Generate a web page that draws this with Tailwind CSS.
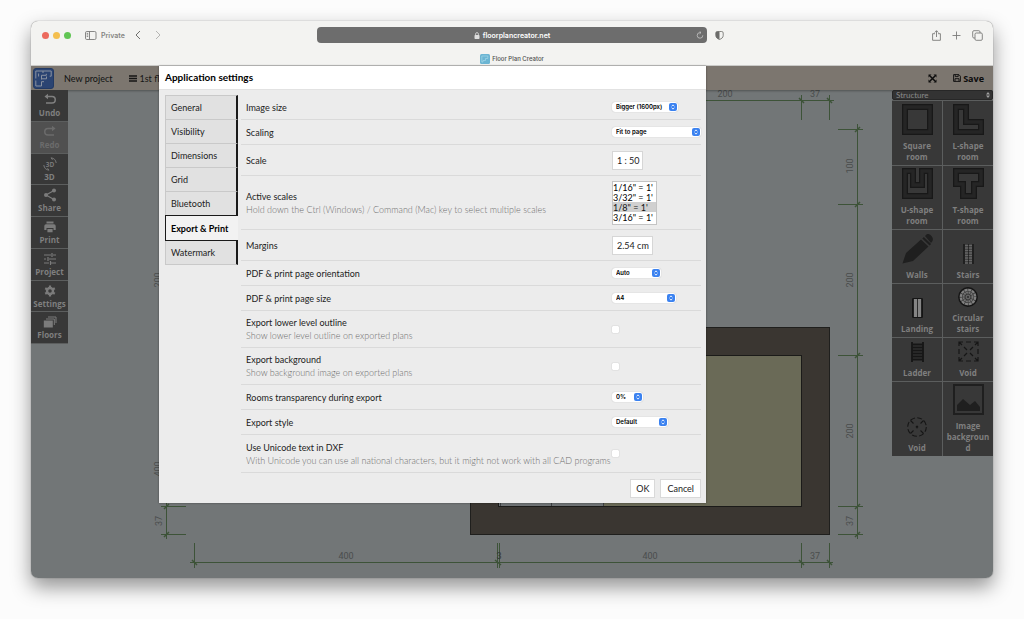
<!DOCTYPE html>
<html lang="en">
<head>
<meta charset="utf-8">
<meta name="viewport" content="width=device-width, initial-scale=1">
<title>Floor Plan Creator</title>
<script src="https://cdn.jsdelivr.net/npm/@tailwindcss/browser@4"></script>
</head>
<body class="flex min-h-screen flex-col bg-[#fcfcfc] px-[31px] pt-[21px] pb-[41px] font-['Lato','Open_Sans',sans-serif] text-[9px] leading-[13px] text-[#222]">
<svg class="hidden">
  <symbol id="updown" viewBox="0 0 8 8"><rect width="8" height="8" rx="2" fill="#3b82f0"/><path d="M2.6 3.2 4 1.9l1.4 1.3M2.6 4.8 4 6.1l1.4-1.3" fill="none" stroke="#fff" stroke-width=".9"/></symbol>
</svg>
<div class="flex flex-1 flex-col overflow-hidden rounded-[7px] bg-[#f3f3f1] shadow-[0_0_1px_rgba(0,0,0,0.6),0_9px_20px_rgba(0,0,0,0.42)]">

  <!-- Browser chrome -->
  <header class="border-b border-[#cfcfcd] font-['Inter',sans-serif] text-[#7b7b79]">
    <div class="grid grid-cols-[1fr_390px_1fr] items-center pt-[6px]">
      <div class="flex items-center pl-[11px]">
        <div class="flex gap-[4px]">
          <span class="size-[7px] rounded-full bg-[#ec6a5e]"></span>
          <span class="size-[7px] rounded-full bg-[#f4bf4f]"></span>
          <span class="size-[7px] rounded-full bg-[#61c554]"></span>
        </div>
        <button class="ml-[14px] flex items-center gap-[4px] text-[7px] font-semibold text-[#858583]">
          <svg class="h-[9px] w-[12px]" viewBox="0 0 12 9" fill="none" stroke="#7b7b79" stroke-width=".9"><rect x=".5" y=".5" width="10.5" height="8" rx="1.3"/><path d="M4.5.5v8M1.7 2.4h1.5M1.7 3.9h1.5M1.7 5.4h1.5"/></svg>
          Private
        </button>
        <button aria-label="Back" class="ml-[10px]"><svg class="h-[10px] w-[6px]" viewBox="0 0 6 10" fill="none" stroke="#70706e" stroke-width="1"><path d="M5 1 1 5l4 4"/></svg></button>
        <button aria-label="Forward" class="ml-[14px]"><svg class="h-[10px] w-[6px]" viewBox="0 0 6 10" fill="none" stroke="#b5b5b3" stroke-width="1"><path d="m1 1 4 4-4 4"/></svg></button>
      </div>
      <div class="relative flex h-[16px] items-center justify-center gap-[3px] rounded-[4px] bg-[#6d6d6d] text-[7px] font-semibold text-white">
        <svg class="h-[7px] w-[6px]" viewBox="0 0 6 7"><rect x=".5" y="3" width="5" height="4" rx=".7" fill="#ddd"/><path d="M1.6 3V2a1.4 1.4 0 0 1 2.8 0v1" fill="none" stroke="#ddd" stroke-width=".8"/></svg>
        floorplancreator.net
        <button aria-label="Reload" class="absolute right-[3px]"><svg class="size-[8px]" viewBox="0 0 8 8" fill="none" stroke="#c6c6c6" stroke-width=".8"><path d="M6.8 4.3A2.8 2.8 0 1 1 4 1.6h.8M3.6.3l1.4 1.3-1.4 1.3"/></svg></button>
      </div>
      <div class="flex items-center pl-[8px] pr-[10px]">
        <svg class="size-[9px]" viewBox="0 0 9 9"><path d="M4.500.5h2.200a1.500 1.500 0 0 1 1.500 1.500v2.600c0 2-1.700 3.100-3.700 3.900C2.500 7.700.8 6.600.8 4.600V2A1.500 1.500 0 0 1 2.300.5z" fill="none" stroke="#6c6c6a" stroke-width=".8"/><path d="M4.500.5H2.300A1.500 1.500 0 0 0 .8 2v2.600c0 2 1.700 3.100 3.700 3.900z" fill="#6c6c6a"/></svg>
        <div class="ml-auto flex items-center gap-[11px]">
          <button aria-label="Share"><svg class="h-[11px] w-[9px]" viewBox="0 0 9 11" fill="none" stroke="#7b7b79" stroke-width=".9"><path d="M3 3.700H.6v6.600h7.800V3.700H6M4.500 7V.8M2.700 2.500 4.500.7l1.800 1.800"/></svg></button>
          <button aria-label="New tab"><svg class="size-[9px]" viewBox="0 0 9 9" stroke="#7b7b79" stroke-width=".9"><path d="M4.500.5v8M.5 4.500h8"/></svg></button>
          <button aria-label="Tabs"><svg class="size-[11px]" viewBox="0 0 11 11" fill="none" stroke="#7b7b79" stroke-width=".9"><rect x="3" y="3" width="7.300" height="7.300" rx="1.200"/><path d="M3 8H1.900A1.200 1.200 0 0 1 .7 6.800V1.900A1.200 1.200 0 0 1 1.900.7h4.900A1.200 1.200 0 0 1 8 1.900V3"/></svg></button>
        </div>
      </div>
    </div>
    <div class="flex items-center justify-center gap-[2px] pt-[9px] text-[6px] font-medium text-[#4f4f4d]">
      <svg class="size-[10px]" viewBox="0 0 10 10"><rect width="10" height="10" rx="1.500" fill="#6cb5d3"/><path d="M3 8H1.800V2h6v2.500H5.500v2H3z" fill="none" stroke="#a5d7e8" stroke-width=".7"/></svg>
      Floor Plan Creator
    </div>
  </header>

  <!-- Application page -->
  <div class="relative flex flex-1 flex-col bg-[#727677]">
    <svg class="absolute inset-0 h-full w-full" viewBox="31 66 962 512" preserveAspectRatio="xMinYMin slice" font-family="Roboto, sans-serif" font-size="9" fill="none">
      <rect x="470.500" y="327.500" width="359" height="207" fill="#3a3631" stroke="#1f1f1d"/>
      <rect x="498.500" y="355.500" width="303" height="151" fill="#6a6a57" stroke="#1b1b19"/>
      <path d="M499 500h105v6H499z" fill="#6f7375"/>
      <path d="M500.500 500v6M551.500 500v6M603.500 500v6" stroke="#3d4042"/>
      <g stroke="#3d5338" stroke-width="1">
        <path d="M190 562.500h643M194.500 543v25M497.500 543v25M499.500 543v25M801.500 543v25M829.500 543v25"/>
        <path d="M700 100.500h134M801.500 95v25M829.500 95v25"/>
        <path d="M857.500 124v415M838 129.500h25M838 204.500h25M838 355.500h25M838 506.500h25M838 534.500h25"/>
        <path d="M166.500 500v39M161 506.500h25M161 534.500h25"/>
        <path stroke-width="1.500" d="m192 560 5 5M495 560l6 5M799 560l5 5M827 560l5 5M799 98l5 5M827 98l5 5M855 132l5-5M855 207l5-5M855 358l5-5M855 509l5-5M855 537l5-5M164 509l5-5M164 537l5-5"/>
      </g>
      <g fill="#4a4d4d" text-anchor="middle">
        <text x="346" y="559">400</text><text x="499" y="559" fill="#333635">3</text><text x="650" y="559">400</text><text x="815" y="559">37</text>
        <text x="725" y="97">200</text><text x="815" y="97">37</text>
        <text transform="translate(853 166) rotate(-90)">100</text>
        <text transform="translate(853 280) rotate(-90)">200</text>
        <text transform="translate(853 431) rotate(-90)">200</text>
        <text transform="translate(853 521) rotate(-90)">37</text>
        <text transform="translate(162 521) rotate(-90)">37</text>
        <text transform="translate(161 280) rotate(-90)">200</text>
        <text transform="translate(161 469) rotate(-90)">400</text>
      </g>
    </svg>

    <nav class="relative flex h-[24px] items-center bg-[#7c766f] text-[#161616] shadow-[0_1px_2px_rgba(0,0,0,0.3)]">
      <svg class="ml-[2px] size-[21px]" viewBox="0 0 21 21"><rect x=".5" y=".5" width="20" height="20" rx="2.500" fill="#2b4472" stroke="#233a63"/><path d="M2.800 10.500V3h15.400v5.200h-1.500M2.800 12.500V18h5.700v-4.300H11M8.500 11.500V7.300h4.800v-1.500M8.500 10.800h5V8.500M5.600 5.500v3M10 3v2" fill="none" stroke="#8a92a0" stroke-width="1"/></svg>
      <a href="#" class="ml-[10px] font-medium">New project</a>
      <button class="ml-[16px] flex w-[31px] items-center gap-[3px] overflow-hidden whitespace-nowrap"><svg class="h-[7px] w-[8px] shrink-0" viewBox="0 0 8 7" stroke="#161616" stroke-width="1.300"><path d="M0 1h8M0 3.500h8M0 6h8"/></svg>1st flo</button>
      <button aria-label="Full screen" class="ml-auto"><svg class="size-[9px]" viewBox="0 0 9 9" fill="#0c0c0c"><path d="M.5.500h3L.5 3.500zM8.500.500v3l-3-3zM.5 8.500v-3l3 3zM8.500 8.500h-3l3-3z"/><path d="m2 2 5 5M7 2 2 7" stroke="#0c0c0c" stroke-width="1.500"/></svg></button>
      <button class="mr-[9px] ml-[16px] flex items-center gap-[2px] font-['Open_Sans',sans-serif] font-bold text-[#0c0c0c]"><svg class="size-[8px]" viewBox="0 0 8 8" fill="none" stroke="#0c0c0c" stroke-width=".9"><path d="M.6.6h5.200l1.600 1.600v5.200H.6zM2.200.6v2h3v-2M2 7.400V4.700h4v2.700"/></svg>Save</button>
    </nav>

    <div class="relative flex items-start justify-between font-['Open_Sans',sans-serif] text-[8px] leading-[11px] font-bold text-[#7f7f7f]">
      <div class="grid h-[254px] w-[37px] auto-rows-fr gap-px bg-[#5c5e5e] pb-px">
        <button class="flex flex-col items-center bg-[#383838] pt-[3px]"><svg class="size-[14px] shrink-0" viewBox="0 0 14 14" fill="none" stroke="#808080" stroke-width="1.500"><path d="M3 3.500h6a3 3 0 0 1 0 6.500H3"/><path d="M5 .8v5.400L1.500 3.500z" fill="#808080" stroke="none"/></svg>Undo</button>
        <button class="flex flex-col items-center bg-[#505050] pt-[3px] text-[#6b6b6b]"><svg class="size-[14px] shrink-0" viewBox="0 0 14 14" fill="none" stroke="#6b6b6b" stroke-width="1.500"><path d="M11 3.500H5A3 3 0 0 0 5 10h6"/><path d="M9 .8v5.400l3.500-2.700z" fill="#6b6b6b" stroke="none"/></svg>Redo</button>
        <button class="flex flex-col items-center bg-[#383838] pt-[3px]"><svg class="size-[14px] shrink-0" viewBox="0 0 14 14" fill="none" stroke="#777"><path d="M8 .8a6 6 0 0 1 5.200 5.200M6 13.200A6 6 0 0 1 .8 8M6 13.200l-1.500-2M8 .8l1.500 2"/><text x="7" y="9.500" text-anchor="middle" font-size="6.500" fill="#777" stroke="none">3D</text></svg>3D</button>
        <button class="flex flex-col items-center bg-[#383838] pt-[3px]"><svg class="size-[14px] shrink-0" viewBox="0 0 14 14" fill="#7b7b7b"><path d="M11 2.500 3 7l8 4.500" fill="none" stroke="#7b7b7b" stroke-width="1.200"/><circle cx="11" cy="2.500" r="2"/><circle cx="3" cy="7" r="2"/><circle cx="11" cy="11.500" r="2"/></svg>Share</button>
        <button class="flex flex-col items-center bg-[#383838] pt-[3px]"><svg class="size-[14px] shrink-0" viewBox="0 0 14 14" fill="#7b7b7b"><path d="M3.500 1.500h7v2h-7zM3 4.300h8a1.700 1.700 0 0 1 1.700 1.700v4H10.500V8h-7v2H1.300V6A1.700 1.700 0 0 1 3 4.300zM4.400 9h5.200v3.300H4.400z"/></svg>Print</button>
        <button class="flex flex-col items-center bg-[#383838] pt-[3px]"><svg class="size-[14px] shrink-0" viewBox="0 0 14 14" fill="none" stroke="#7b7b7b" stroke-width="1.200"><path d="M1 3h7M10 3h3M9 1v4M1 7h2M6 7h7M5 5v4M1 11h5M8 11h5M7.500 9v4"/></svg>Project</button>
        <button class="flex flex-col items-center bg-[#383838] pt-[3px]"><svg class="size-[14px] shrink-0" viewBox="0 0 14 14" fill="none" stroke="#7b7b7b"><circle cx="7" cy="7" r="3" stroke-width="2.400"/><path stroke-width="2.200" d="M7 1.500v2M7 10.500v2M2.200 4.200l1.800 1M10 8.800l1.800 1M2.200 9.800 4 8.800M10 5.200l1.800-1"/></svg>Settings</button>
        <button class="flex flex-col items-center bg-[#383838] pt-[3px]"><svg class="size-[14px] shrink-0" viewBox="0 0 14 14"><path d="M.8 5.500h9v7h-9z" fill="#7b7b7b"/><path d="M3 4h8.300v6M5 2h8v6" fill="none" stroke="#7b7b7b" stroke-width="1"/></svg>Floors</button>
      </div>

      <div class="w-[101px]">
        <div class="relative">
          <select aria-label="Category" class="block h-[10px] w-full appearance-none rounded-[2px] border border-[#272727] bg-[#333] px-[3px] font-['Lato',sans-serif] text-[8px] leading-[8px] font-normal text-[#8a8a8a]"><option>Structure</option></select>
          <svg class="pointer-events-none absolute top-[2px] right-[3px] h-[6px] w-[4px]" viewBox="0 0 4 6" fill="#a0a0a0"><path d="M0 2.500 2 0l2 2.500zM0 3.500 2 6l2-2.500z"/></svg>
        </div>
        <div class="grid grid-cols-2 grid-rows-[64px_63px_53px_53px_43px_74px] gap-px bg-[#5c5e5e] pt-px [&>button]:flex [&>button]:flex-col [&>button]:items-center [&>button]:justify-end [&>button]:gap-[5px] [&>button]:bg-[#383838] [&>button]:px-[2px] [&>button]:pb-[3px]">
          <button><svg class="size-[31px]" viewBox="0 0 31 31" fill="none"><path d="M3 3h25v25H3z" stroke="#181818" stroke-width="6"/><path d="M3 3h25v25H3z" stroke="#252525" stroke-width="3.500"/></svg><span>Square<br>room</span></button>
          <button><svg class="size-[31px]" viewBox="0 0 31 31" fill="none"><path d="M3 3h10v15h15v10H3z" stroke="#181818" stroke-width="6"/><path d="M3 3h10v15h15v10H3z" stroke="#252525" stroke-width="3.500"/></svg><span>L-shape<br>room</span></button>
          <button><svg class="size-[31px]" viewBox="0 0 31 31" fill="none"><path d="M3 3h8v14h9V3h8v25H3z" stroke="#181818" stroke-width="6"/><path d="M3 3h8v14h9V3h8v25H3z" stroke="#252525" stroke-width="3.500"/></svg><span>U-shape<br>room</span></button>
          <button><svg class="size-[31px]" viewBox="0 0 31 31" fill="none"><path d="M3 3h25v13h-7v12H10V16H3z" stroke="#181818" stroke-width="6"/><path d="M3 3h25v13h-7v12H10V16H3z" stroke="#252525" stroke-width="3.500"/></svg><span>T-shape<br>room</span></button>
          <button><svg class="size-[31px]" viewBox="0 0 31 31" fill="#1f1f1f"><path d="M.5 30.500 4 20 19 6.500l7.500 7L11 28zM20.300 5.400l1.500-1.300 7.300 7-1.500 1.400zM23 3l1.500-1.500C27-.6 32.500 4.500 30.500 8l-1.500 2z"/></svg>Walls</button>
          <button><svg class="h-[20px] w-[11px]" viewBox="0 0 11 20" fill="none"><path d="M1 0v20M10 0v20M5.500 0v20" stroke="#151515" stroke-width="1.300"/><path d="M2 1.500h7M2 4h7M2 6.500h7M2 9h7M2 11.500h7M2 14h7M2 16.500h7M2 19h7" stroke="#666" stroke-width="1.600"/><path d="M5.500 0v20" stroke="#222" stroke-width=".8"/></svg>Stairs</button>
          <button><svg class="h-[20px] w-[11px]" viewBox="0 0 11 20"><path d="M.5.500h10v19H.5z" fill="#858585" stroke="#151515"/><path d="M1.500 1v18M9.500 1v18" stroke="#222"/><path d="M5.500 1v18" stroke="#222" stroke-width=".9"/></svg>Landing</button>
          <button><svg class="size-[20px]" viewBox="0 0 20 20" fill="none"><circle cx="10" cy="10" r="9.200" stroke="#151515" stroke-width="1.400"/><circle cx="10" cy="10" r="7.200" stroke="#808080" stroke-width="2.200" stroke-dasharray="3 .77"/><circle cx="10" cy="10" r="4.500" stroke="#737373" stroke-width="2" stroke-dasharray="1.800 .55"/><circle cx="10" cy="10" r="1.900" stroke="#777" stroke-width=".9"/></svg><span>Circular<br>stairs</span></button>
          <button><svg class="h-[20px] w-[15px]" viewBox="0 0 15 20" fill="none" stroke="#161616"><path d="M2 0v20M13 0v20" stroke-width="1.800"/><path d="M2 2.500h11M2 5.500h11M2 8.500h11M2 11.500h11M2 14.500h11M2 17.500h11" stroke-width="1.900"/></svg>Ladder</button>
          <button><svg class="size-[21px]" viewBox="0 0 21 21" fill="none" stroke="#161616" stroke-width="1.200"><path d="M1 5V1h4M8 1h5M16 1h4v4M20 8v5M20 16v4h-4M13 20H8M5 20H1v-4M1 13V8M1 1l3 3M20 1l-3 3M1 20l3-3M20 20l-3-3M6 6l3 3M15 6l-3 3M6 15l3-3M15 15l-3-3"/></svg>Void</button>
          <button><svg class="size-[20px]" viewBox="0 0 20 20" fill="none" stroke="#161616" stroke-width="1.100"><circle cx="10" cy="10" r="9.300" stroke-dasharray="5 2.300"/><path d="m3.500 3.500 3 3M16.500 3.500l-3 3M3.500 16.500l3-3M16.500 16.500l-3-3M9 9l2 2M11 9l-2 2"/></svg>Void</button>
          <button><svg class="size-[31px]" viewBox="0 0 31 31"><path d="M1 1h29v29H1z" fill="none" stroke="#1f1f1f" stroke-width="2"/><path d="M4 27v-6l6-6 7 6 5-4 5 6v4z" fill="#1f1f1f"/></svg><span>Image<br>backgroun<br>d</span></button>
        </div>
      </div>
    </div>

    <!-- Settings dialog -->
    <section role="dialog" aria-labelledby="dlg-title" class="absolute top-0 left-[128px] w-[547px] bg-[#ececec] shadow-[0_0_2px_rgba(0,0,0,0.4)]">
      <h1 id="dlg-title" class="border-b border-[#e2e2e2] bg-white px-[6px] py-[5px] text-[10px] font-bold text-black">Application settings</h1>
      <div class="flex items-start gap-[3px] pt-[5px] pr-[5px] pl-[6px]">
        <div role="tablist" class="flex w-[73px] flex-col [&>button]:flex [&>button]:items-center [&>button]:px-[5px]">
          <button role="tab" class="h-[24px] border-t border-l border-[#c9c9c9] border-r-2 border-r-[#1a1a1a] bg-[#e1e1e1]">General</button>
          <button role="tab" class="h-[24px] border-t border-l border-[#c9c9c9] border-r-2 border-r-[#1a1a1a] bg-[#e1e1e1]">Visibility</button>
          <button role="tab" class="h-[24px] border-t border-l border-[#c9c9c9] border-r-2 border-r-[#1a1a1a] bg-[#e1e1e1]">Dimensions</button>
          <button role="tab" class="h-[24px] border-t border-l border-[#c9c9c9] border-r-2 border-r-[#1a1a1a] bg-[#e1e1e1]">Grid</button>
          <button role="tab" class="h-[24px] border-t border-l border-[#c9c9c9] border-r-2 border-r-[#1a1a1a] bg-[#e1e1e1]">Bluetooth</button>
          <button role="tab" aria-selected="true" class="h-[26px] border-y border-l border-[#1a1a1a] bg-[#f2f2f2] font-bold whitespace-nowrap text-black">Export &amp; Print</button>
          <button role="tab" class="h-[24px] border-b border-l border-[#c9c9c9] border-r-2 border-r-[#1a1a1a] bg-[#e1e1e1]">Watermark</button>
        </div>
        <form class="flex-1 [&>div]:flex [&>div]:items-center [&>div]:border-b [&>div]:border-[#dadada] [&>div]:pl-[5px] [&>div>label]:w-[366px] [&>div>label]:shrink-0 [&>div>label]:whitespace-nowrap [&_small]:block [&_small]:text-[9px] [&_small]:font-light [&_small]:text-[#6c6c6c] [&_select]:text-black">
          <div class="h-[25px]"><label for="imgsize">Image size</label>
            <span class="relative flex w-[66px] items-center"><select id="imgsize" class="h-[10px] w-full appearance-none rounded-[3px] bg-white pl-[4px] font-['Inter',sans-serif] text-[6px] leading-[10px] font-semibold shadow-[0_0_1px_rgba(0,0,0,0.3)]"><option>Bigger (1600px)</option></select><svg class="pointer-events-none absolute right-px size-[8px]"><use href="#updown"/></svg></span></div>
          <div class="h-[25px]"><label for="scaling">Scaling</label>
            <span class="relative flex w-[89px] items-center"><select id="scaling" class="h-[10px] w-full appearance-none rounded-[3px] bg-white pl-[4px] font-['Inter',sans-serif] text-[6px] leading-[10px] font-semibold shadow-[0_0_1px_rgba(0,0,0,0.3)]"><option>Fit to page</option></select><svg class="pointer-events-none absolute right-px size-[8px]"><use href="#updown"/></svg></span></div>
          <div class="h-[31px]"><label for="scale">Scale</label>
            <input id="scale" value="1 : 50" class="h-[19px] w-[31px] border border-[#d6d6d6] bg-white pl-[4px] text-[9px]"></div>
          <div class="h-[54px]"><label for="scales">Active scales<small>Hold down the Ctrl (Windows) / Command (Mac) key to select multiple scales</small></label>
            <select id="scales" multiple size="4" class="h-[44px] w-[45px] overflow-hidden border border-[#c4c4c4] bg-white text-[9px] [&>option]:h-[10px] [&>option]:min-h-0 [&>option]:px-0 [&>option]:py-0 [&>option]:leading-[10px] [&>option:checked]:bg-[#d0d0d0]"><option>1/16" = 1'</option><option>3/32" = 1'</option><option selected>1/8" = 1'</option><option>3/16" = 1'</option></select></div>
          <div class="h-[31px]"><label for="margins">Margins</label>
            <input id="margins" value="2.54 cm" class="h-[19px] w-[41px] border border-[#d6d6d6] bg-white pl-[4px] text-[9px]"></div>
          <div class="h-[25px]"><label for="orient">PDF &amp; print page orientation</label>
            <span class="relative flex w-[49px] items-center"><select id="orient" class="h-[10px] w-full appearance-none rounded-[3px] bg-white pl-[4px] font-['Inter',sans-serif] text-[6px] leading-[10px] font-semibold shadow-[0_0_1px_rgba(0,0,0,0.3)]"><option>Auto</option></select><svg class="pointer-events-none absolute right-px size-[8px]"><use href="#updown"/></svg></span></div>
          <div class="h-[25px]"><label for="pgsize">PDF &amp; print page size</label>
            <span class="relative flex w-[64px] items-center"><select id="pgsize" class="h-[10px] w-full appearance-none rounded-[3px] bg-white pl-[4px] font-['Inter',sans-serif] text-[6px] leading-[10px] font-semibold shadow-[0_0_1px_rgba(0,0,0,0.3)]"><option>A4</option></select><svg class="pointer-events-none absolute right-px size-[8px]"><use href="#updown"/></svg></span></div>
          <div class="h-[37px]"><label for="lower">Export lower level outline<small>Show lower level outline on exported plans</small></label>
            <input id="lower" type="checkbox" class="size-[7px] appearance-none rounded-[1px] bg-white shadow-[0_0_1px_rgba(0,0,0,0.4)]"></div>
          <div class="h-[37px]"><label for="bg">Export background<small>Show background image on exported plans</small></label>
            <input id="bg" type="checkbox" class="size-[7px] appearance-none rounded-[1px] bg-white shadow-[0_0_1px_rgba(0,0,0,0.4)]"></div>
          <div class="h-[25px]"><label for="transp">Rooms transparency during export</label>
            <span class="relative flex w-[31px] items-center"><select id="transp" class="h-[10px] w-full appearance-none rounded-[3px] bg-white pl-[4px] font-['Inter',sans-serif] text-[6px] leading-[10px] font-semibold shadow-[0_0_1px_rgba(0,0,0,0.3)]"><option>0%</option></select><svg class="pointer-events-none absolute right-px size-[8px]"><use href="#updown"/></svg></span></div>
          <div class="h-[25px]"><label for="style">Export style</label>
            <span class="relative flex w-[56px] items-center"><select id="style" class="h-[10px] w-full appearance-none rounded-[3px] bg-white pl-[4px] font-['Inter',sans-serif] text-[6px] leading-[10px] font-semibold shadow-[0_0_1px_rgba(0,0,0,0.3)]"><option>Default</option></select><svg class="pointer-events-none absolute right-px size-[8px]"><use href="#updown"/></svg></span></div>
          <div class="h-[38px]"><label for="unicode">Use Unicode text in DXF<small>With Unicode you can use all national characters, but it might not work with all CAD programs</small></label>
            <input id="unicode" type="checkbox" class="size-[7px] appearance-none rounded-[1px] bg-white shadow-[0_0_1px_rgba(0,0,0,0.4)]"></div>
        </form>
      </div>
      <footer class="flex justify-end gap-[5px] px-[5px] pt-[6px] pb-[5px]">
        <button class="border border-[#d9d9d9] bg-white px-[5px] py-[2px]">OK</button>
        <button class="border border-[#d9d9d9] bg-white px-[6px] py-[2px]">Cancel</button>
      </footer>
    </section>
  </div>
</div>
</body>
</html>
